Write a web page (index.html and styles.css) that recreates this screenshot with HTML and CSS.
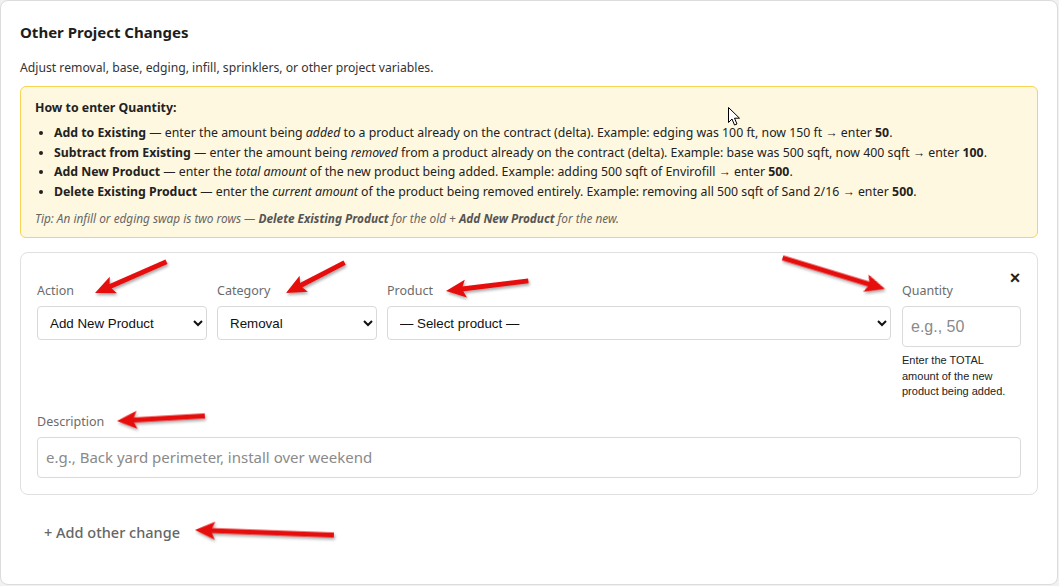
FILE: index.html
```html
<!DOCTYPE html>
<html lang="en">
<head>
<meta charset="utf-8">
<title>Other Project Changes</title>
<link rel="stylesheet" href="styles.css">
</head>
<body>
<div class="page">
  <section class="card">
    <h2 class="title">Other Project Changes</h2>
    <p class="subtitle">Adjust removal, base, edging, infill, sprinklers, or other project variables.</p>

    <div class="howto">
      <p class="howto-title">How to enter Quantity:</p>
      <ul class="howto-list">
        <li><b>Add to Existing</b> — enter the amount being <i>added</i> to a product already on the contract (delta). Example: edging was 100 ft, now 150 ft → enter <b>50</b>.</li>
        <li><b>Subtract from Existing</b> — enter the amount being <i>removed</i> from a product already on the contract (delta). Example: base was 500 sqft, now 400 sqft → enter <b>100</b>.</li>
        <li><b>Add New Product</b> — enter the <i>total amount</i> of the new product being added. Example: adding 500 sqft of Envirofill → enter <b>500</b>.</li>
        <li><b>Delete Existing Product</b> — enter the <i>current amount</i> of the product being removed entirely. Example: removing all 500 sqft of Sand 2/16 → enter <b>500</b>.</li>
      </ul>
      <p class="tip">Tip: An infill or edging swap is two rows — <b>Delete Existing Product</b> for the old + <b>Add New Product</b> for the new.</p>
    </div>

    <div class="change">
      <button class="close" type="button">×</button>
      <div class="row">
        <div class="field">
          <label class="label">Action</label>
          <select class="select"><option>Add New Product</option></select>
        </div>
        <div class="field">
          <label class="label">Category</label>
          <select class="select"><option>Removal</option></select>
        </div>
        <div class="field">
          <label class="label">Product</label>
          <select class="select"><option>— Select product —</option></select>
        </div>
        <div class="field qty-field">
          <label class="label">Quantity</label>
          <input class="input qty" type="text" placeholder="e.g., 50">
          <p class="help">Enter the TOTAL amount of the new product being added.</p>
        </div>
      </div>
      <div class="field desc">
        <label class="label">Description</label>
        <input class="input" type="text" placeholder="e.g., Back yard perimeter, install over weekend">
      </div>
    </div>

    <button class="add" type="button">+ Add other change</button>
  </section>

  <svg class="annot" width="1059" height="586" viewBox="0 0 1059 586" aria-hidden="true">
    <defs>
      <filter id="sh" x="-20%" y="-50%" width="140%" height="200%">
        <feDropShadow dx="1" dy="2" stdDeviation="1.4" flood-color="#000" flood-opacity="0.35"/>
      </filter>
    </defs>
    <g filter="url(#sh)">
      <g transform="translate(95 293) rotate(156.4)">
        <line x1="-78" y1="0" x2="-12" y2="0" stroke="#e60d0d" stroke-width="5"/>
        <polygon points="0,0 -20,-9 -16,0 -20,9" fill="#e60d0d"/>
      </g>
      <g transform="translate(286 293) rotate(152.6)">
        <line x1="-66" y1="0" x2="-12" y2="0" stroke="#e60d0d" stroke-width="5"/>
        <polygon points="0,0 -20,-9 -16,0 -20,9" fill="#e60d0d"/>
      </g>
      <g transform="translate(446 291) rotate(173)">
        <line x1="-83" y1="0" x2="-12" y2="0" stroke="#e60d0d" stroke-width="5"/>
        <polygon points="0,0 -20,-9 -16,0 -20,9" fill="#e60d0d"/>
      </g>
      <g transform="translate(885 289) rotate(16.9)">
        <line x1="-107" y1="0" x2="-12" y2="0" stroke="#e60d0d" stroke-width="5"/>
        <polygon points="0,0 -20,-9 -16,0 -20,9" fill="#e60d0d"/>
      </g>
      <g transform="translate(117 421) rotate(176.7)">
        <line x1="-88" y1="0" x2="-12" y2="0" stroke="#e60d0d" stroke-width="5"/>
        <polygon points="0,0 -20,-9 -16,0 -20,9" fill="#e60d0d"/>
      </g>
      <g transform="translate(195 530) rotate(182.1)">
        <line x1="-139" y1="0" x2="-12" y2="0" stroke="#e60d0d" stroke-width="5"/>
        <polygon points="0,0 -20,-9 -16,0 -20,9" fill="#e60d0d"/>
      </g>
    </g>
    <path d="M728.5 107.5 L728.5 122.5 L732 119 L734.5 125 L737 124 L734.5 118.2 L739.5 118.2 Z" fill="#fff" stroke="#000" stroke-width="1" stroke-linejoin="round"/>
  </svg>
</div>
</body>
</html>
```

FILE: styles.css
```css
* {
  box-sizing: border-box;
}

html,
body {
  margin: 0;
  padding: 0;
}

body {
  background: #f1f1f1;
  font-family: "Noto Sans", "Open Sans", sans-serif;
  color: #222;
}

.page {
  position: relative;
  width: 1059px;
  height: 586px;
  overflow: hidden;
}

.card {
  width: 1058px;
  height: 585px;
  background: #fff;
  border: 1px solid #dcdcdc;
  border-radius: 8px;
  padding: 20px 19px 0 19px;
  display: flex;
  flex-direction: column;
  align-items: flex-start;
}

.title {
  margin: 0;
  font-size: 15px;
  line-height: 22px;
  font-weight: 700;
  color: #1d1d1d;
}

.subtitle {
  margin: 15px 0 0 0;
  font-size: 12.2px;
  line-height: 20px;
  color: #333;
}

.howto {
  align-self: stretch;
  margin-top: 8px;
  background: #fff8e0;
  border: 1px solid #f7d455;
  border-radius: 6px;
  padding: 12px 14px 10px 14px;
}

.howto-title {
  margin: 0;
  font-size: 12.3px;
  line-height: 18px;
  font-weight: 700;
  color: #222;
}

.howto-list {
  margin: 6px 0 0 0;
  padding-left: 19px;
  font-size: 12.3px;
  line-height: 19.5px;
  color: #222;
}

.howto-list b {
  font-weight: 700;
}

.tip {
  margin: 9px 0 0 0;
  font-size: 11.8px;
  line-height: 17px;
  font-style: italic;
  color: #666;
}

.tip b {
  color: #555;
}

.change {
  position: relative;
  align-self: stretch;
  margin-top: 14px;
  border: 1px solid #e0e0e0;
  border-radius: 8px;
  padding: 29px 16px 16px 16px;
}

.close {
  position: absolute;
  top: 15px;
  right: 15px;
  border: none;
  background: transparent;
  padding: 0;
  width: 14px;
  height: 20px;
  font-family: "Liberation Sans", Arial, sans-serif;
  font-size: 18px;
  line-height: 20px;
  font-weight: 700;
  color: #222;
}

.row {
  display: grid;
  grid-template-columns: 170px 160px 1fr 120px;
  column-gap: 10px;
  align-items: start;
}

.field {
  display: flex;
  flex-direction: column;
}

.qty-field {
  margin-left: 1px;
}

.label {
  font-size: 12.5px;
  line-height: 18px;
  color: #6b6b6b;
  margin-bottom: 6px;
}

.select {
  height: 34px;
  border: 1px solid #d9d9d9;
  border-radius: 4px;
  background: #fff;
  padding: 0 8px;
  font-family: "Liberation Sans", Arial, sans-serif;
  font-size: 13.33px;
  color: #111;
}

.input {
  height: 41px;
  border: 1px solid #dadada;
  border-radius: 4px;
  background: #fff;
  padding: 0 8px;
  font-family: "Noto Sans", "Open Sans", sans-serif;
  font-size: 15px;
  color: #222;
}

.input::placeholder {
  color: #8a8a8a;
}

.input.qty {
  font-family: "Liberation Sans", Arial, sans-serif;
  font-size: 16px;
}

.help {
  margin: 6px 0 0 0;
  font-family: "Liberation Sans", Arial, sans-serif;
  font-size: 11px;
  line-height: 15.5px;
  color: #222;
}

.desc {
  margin-top: 13px;
}

.add {
  margin-top: 19px;
  border: none;
  background: transparent;
  padding: 8px 24px;
  font-family: "Noto Sans", "Open Sans", sans-serif;
  font-size: 14.5px;
  line-height: 20px;
  font-weight: 500;
  color: #666;
}

.annot {
  position: absolute;
  left: 0;
  top: 0;
  pointer-events: none;
}
```
